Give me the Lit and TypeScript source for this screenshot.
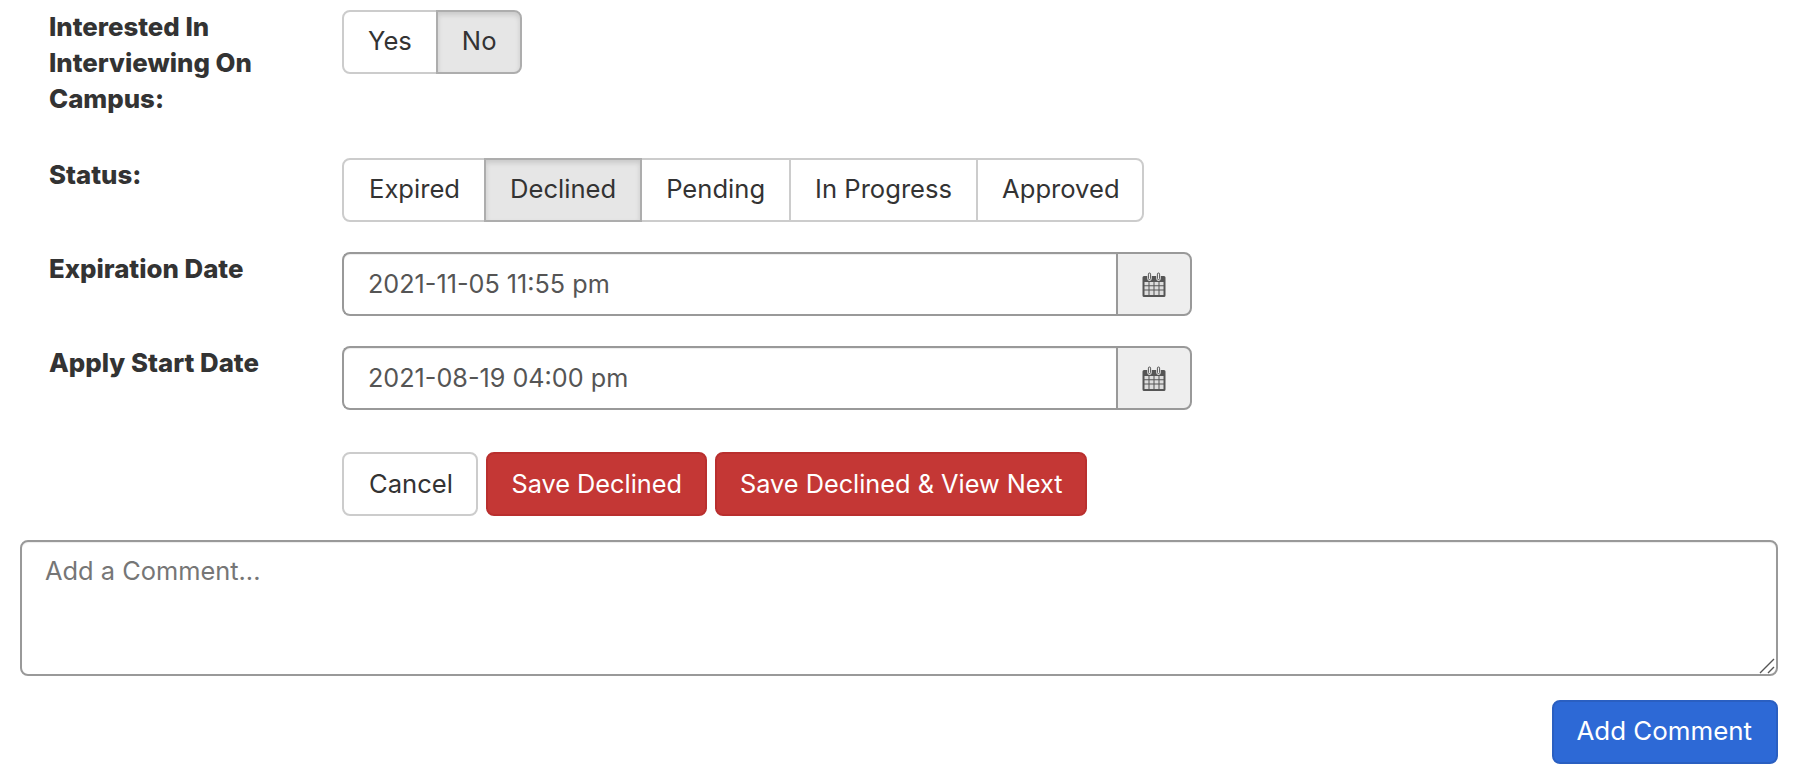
import { LitElement, html, css } from "lit";
import { customElement } from "lit/decorators.js";

const calendar = html`<svg class="cal" width="26" height="26" viewBox="0 0 26 26" aria-hidden="true">
  <path fill="#555" d="M3 4h3.2v2.6a2.3 2.3 0 0 0 4.6 0V4h4.4v2.6a2.3 2.3 0 0 0 4.6 0V4H23a1.5 1.5 0 0 1 1.5 1.5v18A1.5 1.5 0 0 1 23 25H3a1.5 1.5 0 0 1-1.5-1.5v-18A1.5 1.5 0 0 1 3 4z"/>
  <rect x="7.4" y="1" width="2.2" height="6.6" rx="1.1" fill="#eee" stroke="#555" stroke-width="1"/>
  <rect x="16.4" y="1" width="2.2" height="6.6" rx="1.1" fill="#eee" stroke="#555" stroke-width="1"/>
  <path fill="#ddd" d="M3.5 10h4v3.2h-4zM8.5 10h4v3.2h-4zM13.5 10h4v3.2h-4zM18.5 10h4v3.2h-4zM3.5 14.2h4v3.2h-4zM8.5 14.2h4v3.2h-4zM13.5 14.2h4v3.2h-4zM18.5 14.2h4v3.2h-4zM3.5 18.4h4v4.6h-4zM8.5 18.4h4v4.6h-4zM13.5 18.4h4v4.6h-4zM18.5 18.4h4v4.6h-4z"/>
</svg>`;

@customElement("app-root")
export class AppRoot extends LitElement {
  static styles = css`
    :host {
      display: block;
      width: 1798px;
      height: 778px;
      background: #fff;
      font-family: Inter, "Liberation Sans", sans-serif;
      font-size: 25.6px;
      color: #333;
      overflow: hidden;
      box-sizing: border-box;
    }
    * { box-sizing: border-box; }
    .form {
      display: grid;
      grid-template-columns: 293px 1fr;
      padding: 10px 0 0 49px;
      row-gap: 30px;
    }
    .label {
      font-weight: 800;
      font-size: 25.8px;
      line-height: 36px;
      margin-top: -1px;
      width: 240px;
    }
    .row1 { padding-bottom: 11px; }
    .group { display: inline-flex; height: 64px; }
    .seg {
      display: flex;
      align-items: center;
      height: 64px;
      padding: 0 24px 4px;
      background: #fff;
      border: 2px solid #ccc;
      margin-left: -2px;
      color: #333;
    }
    .seg:first-child { margin-left: 0; padding-left: 25px; border-radius: 8px 0 0 8px; }
    .seg:last-child { padding-right: 22px; border-radius: 0 8px 8px 0; }
    .seg.yes:first-child { padding-left: 24px; }
    .seg.no:last-child { padding-right: 24px; }
    .seg.active {
      background: #e6e6e6;
      border-color: #adadad;
      box-shadow: inset 0 3px 5px rgba(0, 0, 0, 0.125);
      position: relative;
    }
    .date { display: flex; width: 850px; height: 64px; }
    .date .value {
      flex: 1;
      display: flex;
      align-items: center;
      padding: 0 24px;
      font-size: 25.2px;
      color: #555;
      border: 2px solid #999;
      border-right: 0;
      border-radius: 8px 0 0 8px;
      box-shadow: inset 0 1px 1px rgba(0, 0, 0, 0.075);
    }
    .date .addon {
      width: 76px;
      display: flex;
      align-items: center;
      justify-content: center;
      padding-top: 2px;
      background: #eee;
      border: 2px solid #999;
      border-radius: 0 8px 8px 0;
    }
    .cal { display: block; }
    .actions { display: flex; gap: 8px; margin-top: 12px; }
    .btn {
      display: flex;
      align-items: center;
      height: 64px;
      padding: 0 24px 2px;
      border-radius: 8px;
      border: 2px solid #ccc;
      background: #fff;
      color: #333;
    }
    .btn.cancel { padding-left: 25px; padding-right: 23px; }
    .btn.red {
      font-size: 25.3px;
      padding: 0 22.5px 2px;
      background: #c43735;
      border-color: #b92f2e;
      color: #fff;
    }
    .btn.red.first { padding: 0 23.5px 2px; }
    .btn.blue {
      font-size: 25.9px;
      padding: 0 24px 4px 22px;
      background: #2d69d6;
      border-color: #2a5fc1;
      color: #fff;
    }
    .comment { position: relative; padding: 24px 20px 0 20px; }
    textarea {
      display: block;
      width: 100%;
      height: 136px;
      padding: 11px 23px 13px;
      font: inherit;
      font-size: 25.4px;
      line-height: 36px;
      color: #555;
      border: 2px solid #999;
      border-radius: 8px;
      outline: none;
      resize: none;
      box-shadow: inset 0 1px 1px rgba(0, 0, 0, 0.075);
      background: #fff;
    }
    textarea::placeholder { color: #767676; opacity: 1; }
    .grip { position: absolute; right: 23px; bottom: 2px; display: block; }
    .footer { display: flex; justify-content: flex-end; padding: 24px 20px 0 0; }
  `;

  render() {
    return html`
      <div class="form">
        <div class="label row1">Interested In Interviewing On Campus:</div>
        <div class="group">
          <div class="seg yes">Yes</div>
          <div class="seg no active">No</div>
        </div>
        <div class="label">Status:</div>
        <div class="group">
          <div class="seg">Expired</div>
          <div class="seg active">Declined</div>
          <div class="seg">Pending</div>
          <div class="seg">In Progress</div>
          <div class="seg">Approved</div>
        </div>
        <div class="label">Expiration Date</div>
        <div class="date">
          <div class="value">2021-11-05 11:55 pm</div>
          <div class="addon">${calendar}</div>
        </div>
        <div class="label">Apply Start Date</div>
        <div class="date">
          <div class="value">2021-08-19 04:00 pm</div>
          <div class="addon">${calendar}</div>
        </div>
        <div></div>
        <div class="actions">
          <div class="btn cancel">Cancel</div>
          <div class="btn red first">Save Declined</div>
          <div class="btn red">Save Declined &amp; View Next</div>
        </div>
      </div>
      <div class="comment">
        <textarea placeholder="Add a Comment..."></textarea>
        <svg class="grip" width="16" height="16" viewBox="0 0 16 16" aria-hidden="true">
          <path d="M1 15L15 1M9 15L15 9" stroke="#555" stroke-width="1.4" fill="none"/>
        </svg>
      </div>
      <div class="footer"><div class="btn blue">Add Comment</div></div>
    `;
  }
}
